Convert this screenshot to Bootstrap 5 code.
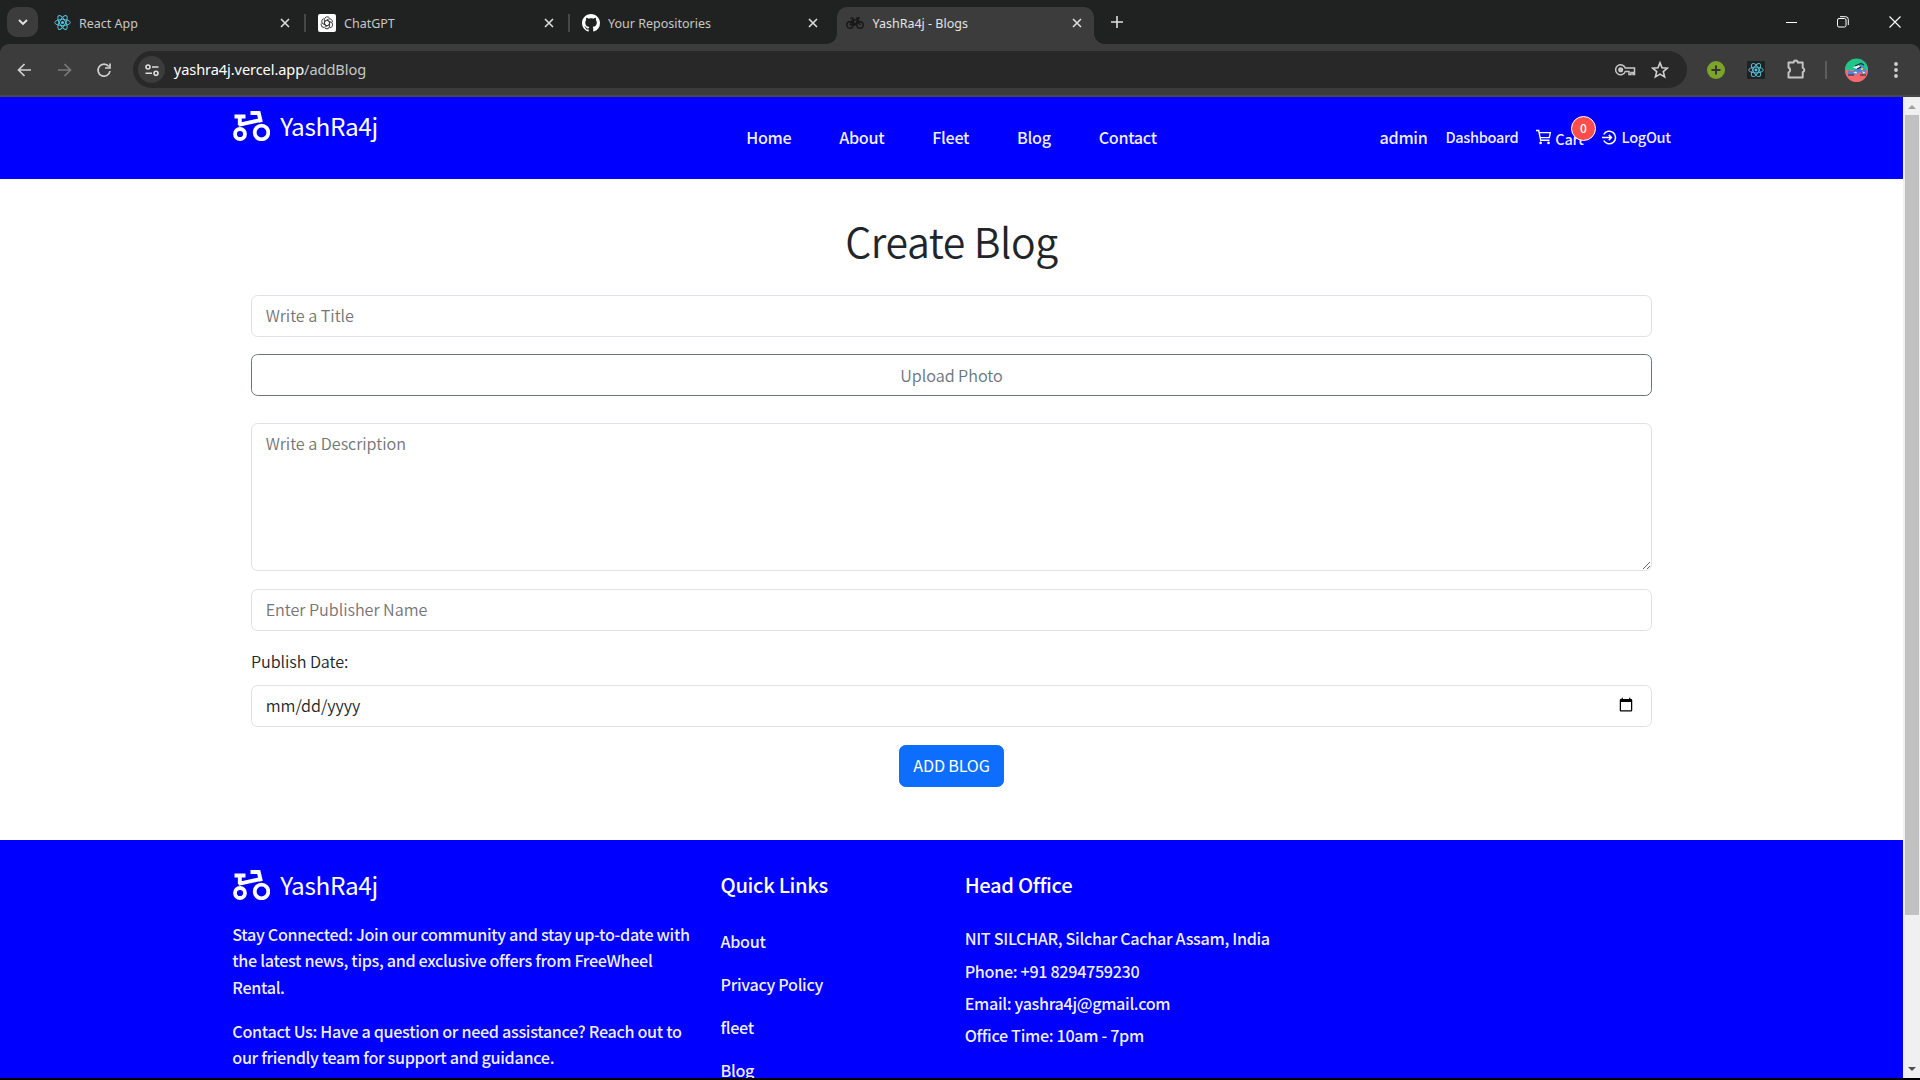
<!DOCTYPE html>
<html lang="en">
<head>
<meta charset="utf-8">
<title>YashRa4j - Blogs</title>
<link rel="stylesheet" href="https://cdn.jsdelivr.net/npm/bootstrap@5.3.0/dist/css/bootstrap.min.css">
<style>
html{font-size:17.6px}
body{height:1080px;overflow:hidden;background:#000;font-family:"Noto Sans CJK JP",sans-serif;font-weight:400;font-size:16.2px;letter-spacing:-.005em}
svg{display:block;flex:none}
/* browser frame */
.chrome-ui{font-family:"Noto Sans","Open Sans",sans-serif;background:#202221;height:97px;letter-spacing:0}
.tabstrip{height:44px;padding-left:7px}
.tabmenu{width:31px;height:30px;border-radius:10px;background:#3c3c3c;margin-right:6px}
.tab-item{width:264px;height:37px;font-size:12.5px;color:#c7c7c7;padding:0 18.5px 6px 9.5px;position:relative}
.tab-item .tab-text{margin-left:8.5px;white-space:nowrap;position:relative;top:1.5px}
.tab-item.sep::after{content:"";position:absolute;right:2px;top:7px;width:2px;height:18px;background:#464746}
.tab-item.current{width:257px;background:#3c3c3c;border-radius:10px 10px 0 0;color:#e3e3e3;padding-left:9px;padding-right:12.5px;margin-left:1px}
.tab-item.current::before,.tab-item.current::after{content:"";position:absolute;bottom:0;width:10px;height:10px}
.tab-item.current::before{left:-10px;background:radial-gradient(circle at 0 0,transparent 9.5px,#3c3c3c 10px)}
.tab-item.current::after{right:-10px;background:radial-gradient(circle at 100% 0,transparent 9.5px,#3c3c3c 10px)}
.newtab{margin-left:16.5px}
.winbtns{gap:40px;padding-right:19px}
.toolbar{height:53px;background:#3c3c3c;border-bottom:2px solid #474747;border-radius:9px 9px 0 0;padding:0 14px 0 14px}
.omni{height:37px;width:1554px;border-radius:19px;background:#282828;margin-left:19px;padding:0 18px 0 5px;font-size:14.6px;letter-spacing:-.09px;color:#c7c7c7}
.siteinfo{width:27px;height:27px;border-radius:50%;background:#3c3c3c}
.omni b{font-weight:400;color:#fff}
.starico{margin-left:15px}
/* page */
.viewport-row{height:981px}
.page-body{width:1903px;background:#fff;overflow:hidden}
.scroll-track{width:17px;background:#f0f0f0;padding:7px 0 6px}
.scroll-thumb{width:14px;height:800px;background:#c1c1c1;margin:5px auto 0 2px}
.wrap{width:1464px;margin:0 auto;padding:0 12.8px}
.blue{background:#00f;color:#fff;font-weight:500;letter-spacing:-.021em}
.soft{color:rgba(255,255,255,.95)}
.site-head,.head-inner{height:82px}
.brand{font-size:24.4px;line-height:40px;gap:10px;font-weight:400;letter-spacing:-.015em;padding-left:1px}
.brand-top{margin-top:9px}
.head-side{flex:1 1 0}
.main-links{gap:48px;padding-bottom:1.5px}
.user-links{font-size:14.6px;gap:18px;padding-bottom:1.5px}
.user-name{font-size:16.2px}
.cart-word{margin-left:3px;position:relative;top:2px}
.cart-count{position:absolute;left:34.5px;top:-10px;width:25px;height:25px;border-radius:50%;background:#ff4d4d;border:1px solid #fff;font-size:12px;line-height:22px;text-align:center;color:#fff}
.logout{gap:5px}
.blog-form{width:1401px;margin:0 auto;font-weight:350}
.form-control{border-color:#dee2e6;color:#212529;height:42px;font-size:16.2px;font-weight:350;letter-spacing:-.003em;padding:5.6px 13.7px 7.6px}
input[type=date].form-control{padding-right:15px}
.form-control::placeholder{color:#757575;opacity:1}
textarea.form-control{height:148px;line-height:26.4px}
.page-title{font-weight:350;font-size:41px;line-height:52.8px;padding-top:35px;margin-bottom:28px;letter-spacing:-.01em}
.upload{height:42px;margin-bottom:27px;font-size:16.2px;font-weight:350;letter-spacing:-.003em;padding-top:5.3px}
.publish-label{line-height:26.4px;margin-top:-1px;margin-bottom:11px}
.add-btn{font-size:16.2px;letter-spacing:-.012em;height:42px;margin-bottom:53px;padding-top:5.3px}
.foot{height:300px;line-height:26.4px}
.foot h5{font-size:20.2px;font-weight:500;line-height:26.4px;padding-top:32.5px;margin-bottom:30px}
.foot .office h5{margin-bottom:27px}
.about-col{padding-top:25px}
.about-col .brand{margin-bottom:16.5px}
.links-list li{margin-bottom:16.6px}
.office p{margin-bottom:5.9px}
</style>
<script src="https://cdn.jsdelivr.net/npm/bootstrap@5.3.0/dist/js/bootstrap.bundle.min.js"></script>
</head>
<body>
<svg width="0" height="0" class="position-absolute">
<symbol id="reactlogo" viewBox="0 0 24 24"><g fill="none" stroke="#53c1de" stroke-width="1.4"><ellipse cx="12" cy="12" rx="11" ry="4.3"/><ellipse cx="12" cy="12" rx="11" ry="4.3" transform="rotate(60 12 12)"/><ellipse cx="12" cy="12" rx="11" ry="4.3" transform="rotate(120 12 12)"/></g><circle cx="12" cy="12" r="2.2" fill="#53c1de"/></symbol>
<symbol id="xmark" viewBox="0 0 10 10"><path d="M1 1l8 8M9 1l-8 8" stroke="#dedede" stroke-width="1.6"/></symbol>
<symbol id="bikelogo" viewBox="0 0 37 30"><g fill="none" stroke="#fff"><circle cx="7" cy="23" r="5" stroke-width="3.8"/><circle cx="28.5" cy="21.500" r="6.800" stroke-width="3.800"/><path d="M1.500 5.500h11M6.800 5v9M17.500 2h8.200l2.200 9.300M5.500 13.800l22.500-4.900" stroke-width="3.900"/></g></symbol>
</svg>

<header class="chrome-ui">
 <div class="tabstrip d-flex align-items-end">
  <div class="tabmenu d-flex align-items-center justify-content-center align-self-center"><svg width="10" height="7" viewBox="0 0 10 7"><path d="M1 1l4 4 4-4" fill="none" stroke="#e3e3e3" stroke-width="1.9"/></svg></div>
  <div class="tab-item sep d-flex align-items-center"><svg width="17" height="17"><use href="#reactlogo"/></svg><span class="tab-text me-auto">React App</span><svg width="10" height="10"><use href="#xmark"/></svg></div>
  <div class="tab-item sep d-flex align-items-center"><svg width="18" height="18" viewBox="0 0 18 18"><rect width="18" height="18" rx="2" fill="#fff"/><g fill="none" stroke="#333" stroke-width=".9"><g id="petal"><path d="M6.4 10.3V5.6a2.9 2.9 0 0 1 5.2-1.7M6.4 7.5L10.4 5.1a2.900 2.900 0 0 1 4 3.200"/></g><use href="#petal" transform="rotate(120 9 9)"/><use href="#petal" transform="rotate(240 9 9)"/><path d="M9 6.3l2.400 1.400v2.700L9 11.800l-2.400-1.400V7.700z"/></g></svg><span class="tab-text me-auto">ChatGPT</span><svg width="10" height="10"><use href="#xmark"/></svg></div>
  <div class="tab-item d-flex align-items-center"><svg width="18" height="18" viewBox="0 0 16 16"><path fill="#fff" d="M8 0C3.58 0 0 3.58 0 8c0 3.54 2.29 6.53 5.47 7.59.4.07.55-.17.55-.38 0-.19-.01-.82-.01-1.49-2.01.37-2.53-.49-2.69-.94-.09-.23-.48-.94-.82-1.13-.28-.15-.68-.52-.01-.53.63-.01 1.08.58 1.23.82.72 1.21 1.87.87 2.33.66.07-.52.28-.87.51-1.07-1.78-.2-3.64-.89-3.64-3.95 0-.87.31-1.59.82-2.15-.08-.2-.36-1.02.08-2.12 0 0 .67-.21 2.2.82.64-.18 1.32-.27 2-.27s1.36.09 2 .27c1.53-1.04 2.2-.82 2.2-.82.44 1.1.16 1.92.08 2.12.51.56.82 1.27.82 2.15 0 3.07-1.87 3.75-3.65 3.95.29.25.54.73.54 1.48 0 1.07-.01 1.93-.01 2.2 0 .21.15.46.55.38A8 8 0 0 0 16 8c0-4.42-3.58-8-8-8z"/></svg><span class="tab-text me-auto">Your Repositories</span><svg width="10" height="10"><use href="#xmark"/></svg></div>
  <div class="tab-item current d-flex align-items-center"><svg width="18" height="14" viewBox="0 0 18 14"><g fill="none" stroke="#171717" stroke-width="1.4"><circle cx="4" cy="9" r="3.2"/><circle cx="14" cy="9" r="3.2"/><path d="M4 9l2.500-5h5.500L9 9H4M6.500 4L9 9M14 9l-3-7h3M4.500 2.300h3"/></g></svg><span class="tab-text me-auto">YashRa4j - Blogs</span><svg width="10" height="10"><use href="#xmark"/></svg></div>
  <svg class="align-self-center newtab" width="12" height="12" viewBox="0 0 12 12"><path d="M6 0v12M0 6h12" stroke="#dedede" stroke-width="1.6"/></svg>
  <div class="winbtns d-flex align-items-center align-self-center ms-auto"><svg width="11" height="11"><path d="M0 5.500h11" stroke="#fff"/></svg><svg width="12" height="12" viewBox="0 0 12 12"><g fill="none" stroke="#fff"><rect x=".5" y="2.5" width="8.5" height="8.5" rx="1.5"/><path d="M3 .7h5.500a2.700 2.700 0 0 1 2.800 2.800V9"/></g></svg><svg width="12" height="12" viewBox="0 0 12 12"><path d="M.5.5l11 11M11.500.5l-11 11" stroke="#fff" stroke-width="1.1"/></svg></div>
 </div>
 <div class="toolbar d-flex align-items-center">
  <svg width="100" height="20" viewBox="0 0 100 20"><g fill="none" stroke-width="1.7"><path d="M17 10H4.500M10.500 4l-6 6 6 6" stroke="#d0d0d0"/><path d="M44 10h12.500M50.500 4l6 6-6 6" stroke="#7a7a7a"/><path d="M94.800 6.500A6 6 0 1 0 96 11M96 3.500v4.500h-5" stroke="#d0d0d0"/></g></svg>
  <div class="omni d-flex align-items-center"><span class="siteinfo d-flex align-items-center justify-content-center"><svg width="14" height="12" viewBox="0 0 14 12"><g fill="none" stroke="#dedede" stroke-width="1.6"><circle cx="3" cy="3" r="2"/><path d="M7 3h6.500M.5 9.200H7"/><circle cx="11" cy="9.200" r="2"/></g></svg></span><span class="ms-2 me-auto"><b>yashra4j.vercel.app</b>/addBlog</span>
   <svg width="21" height="14" viewBox="0 0 21 14"><g fill="none" stroke="#c7c7c7" stroke-width="1.5"><path d="M10.300 5H19.500v6.500h-1.500v-2h-2v2h-2v-3h-3.700a5 5 0 1 1 0-3.500z"/><circle cx="5.700" cy="6.800" r="1.800" fill="#c7c7c7"/></g></svg>
   <svg class="starico" width="18" height="18" viewBox="0 0 18 18"><path d="M9 1.700l2 5 5.400.4-4.100 3.500 1.300 5.300L9 13.100l-4.600 2.800 1.300-5.300L1.600 7.100 7 6.700z" fill="none" stroke="#d0d0d0" stroke-width="1.600"/></svg></div>
  <svg width="218" height="30" viewBox="0 0 218 30" class="ms-auto"><g transform="translate(-1688 -55)">
   <circle cx="1716" cy="70" r="9" fill="#7ba428"/><path d="M1716 65.500v9M1711.500 70h9" stroke="#333" stroke-width="2"/>
   <rect x="1747" y="61" width="18" height="18" fill="#202221"/><use href="#reactlogo" x="1748" y="62" width="16" height="16"/>
   <path d="M1788.500 62.500h5.200a2 2 0 0 1 4 0h5v5.300a2.300 2.300 0 0 1 0 4.400v5.300h-14.200v-5a2.700 2.700 0 0 0 0-5z" fill="none" stroke="#c7c7c7" stroke-width="1.900" stroke-linejoin="round"/>
   <path d="M1826 61v18" stroke="#686868" stroke-width="1.500"/>
   <circle cx="1856.500" cy="70.500" r="11.500" fill="#f46a6c"/><path d="M1845 70a11.500 11.500 0 0 1 23 0z" fill="#20c58a"/>
   <path d="M1848 74.500v-4l5 1 3-3 4-3h3l3 5v3l-2 1-4-3-3 3z" fill="#4f86d8"/><path d="M1853 67.500l5-3 2 2-3 2.500zM1853 73l3-1.500 1.500 2zM1862 71.500l3 .5-1 2z" fill="#f2f6fb"/><path d="M1855 66l6-2.500 3 1.500M1857 69l4-2M1848 75h6M1860 75h6" stroke="#172846" stroke-width="1.200" fill="none"/><circle cx="1862" cy="69" r="1.200" fill="#f0cf3c"/>
   <g fill="#d0d0d0"><circle cx="1896" cy="64" r="1.900"/><circle cx="1896" cy="70" r="1.900"/><circle cx="1896" cy="76" r="1.900"/></g>
  </g></svg>
 </div>
</header>

<div class="viewport-row d-flex">
 <div class="page-body">
  <nav class="site-head blue">
   <div class="wrap head-inner d-flex">
    <div class="head-side"><div class="brand brand-top d-flex align-items-center"><svg width="37" height="30"><use href="#bikelogo"/></svg><span>YashRa4j</span></div></div>
    <div class="main-links soft d-flex align-items-center"><span>Home</span><span>About</span><span>Fleet</span><span>Blog</span><span>Contact</span></div>
    <div class="head-side user-links soft d-flex align-items-center justify-content-end"><span class="user-name">admin</span><span>Dashboard</span>
     <span class="position-relative d-flex align-items-center"><svg width="16" height="16" viewBox="0 0 16 16"><g fill="none" stroke="#fff" stroke-width="1.400"><path d="M0 1.500h2.700l2 9.800h8.800M3.300 3.600h11l-1 5H4.300"/></g><circle cx="4.600" cy="13.900" r="1.300" fill="#fff"/><circle cx="12.500" cy="13.900" r="1.300" fill="#fff"/></svg><span class="cart-word">Cart</span><span class="cart-count">0</span></span>
     <span class="d-flex align-items-center logout"><svg width="15" height="15" viewBox="0 0 15 15"><g fill="none" stroke="#fff" stroke-width="1.500"><path d="M1.700 4.500a6.300 6.300 0 1 1 0 6M0 7.500h9M6.800 4.900l2.600 2.600-2.600 2.600"/></g></svg><span>LogOut</span></span></div>
   </div>
  </nav>
  <main class="blog-form">
   <h1 class="page-title text-center">Create Blog</h1>
   <input class="form-control mb-3" placeholder="Write a Title">
   <button class="btn btn-outline-secondary w-100 upload">Upload Photo</button>
   <textarea class="form-control mb-3" placeholder="Write a Description"></textarea>
   <input class="form-control mb-3" placeholder="Enter Publisher Name">
   <label class="d-block publish-label">Publish Date:</label>
   <input type="date" class="form-control mb-3">
   <div class="text-center"><button class="btn btn-primary add-btn">ADD BLOG</button></div>
  </main>
  <footer class="foot blue">
   <div class="wrap">
    <div class="row">
     <div class="col-4 about-col"><div class="brand d-flex align-items-center"><svg width="37" height="30"><use href="#bikelogo"/></svg><span>YashRa4j</span></div>
      <p class="soft mb-3">Stay Connected: Join our community and stay up-to-date with the latest news, tips, and exclusive offers from FreeWheel Rental.</p>
      <p class="soft">Contact Us: Have a question or need assistance? Reach out to our friendly team for support and guidance.</p></div>
     <div class="col-2"><h5>Quick Links</h5><ul class="list-unstyled links-list soft"><li>About</li><li>Privacy Policy</li><li>fleet</li><li>Blog</li></ul></div>
     <div class="col-4 office"><h5>Head Office</h5><div class="soft"><p>NIT SILCHAR, Silchar Cachar Assam, India</p><p>Phone: +91 8294759230</p><p>Email: yashra4j@gmail.com</p><p>Office Time: 10am - 7pm</p></div></div>
    </div>
   </div>
  </footer>
 </div>
 <div class="scroll-track d-flex flex-column"><svg class="mx-auto" width="8" height="6"><path d="M0 5L4 1l4 4z" fill="#a0a0a0"/></svg><div class="scroll-thumb"></div><svg class="mx-auto mt-auto" width="8" height="5"><path d="M0 0h8L4 4z" fill="#505050"/></svg></div>
</div>
</body>
</html>
